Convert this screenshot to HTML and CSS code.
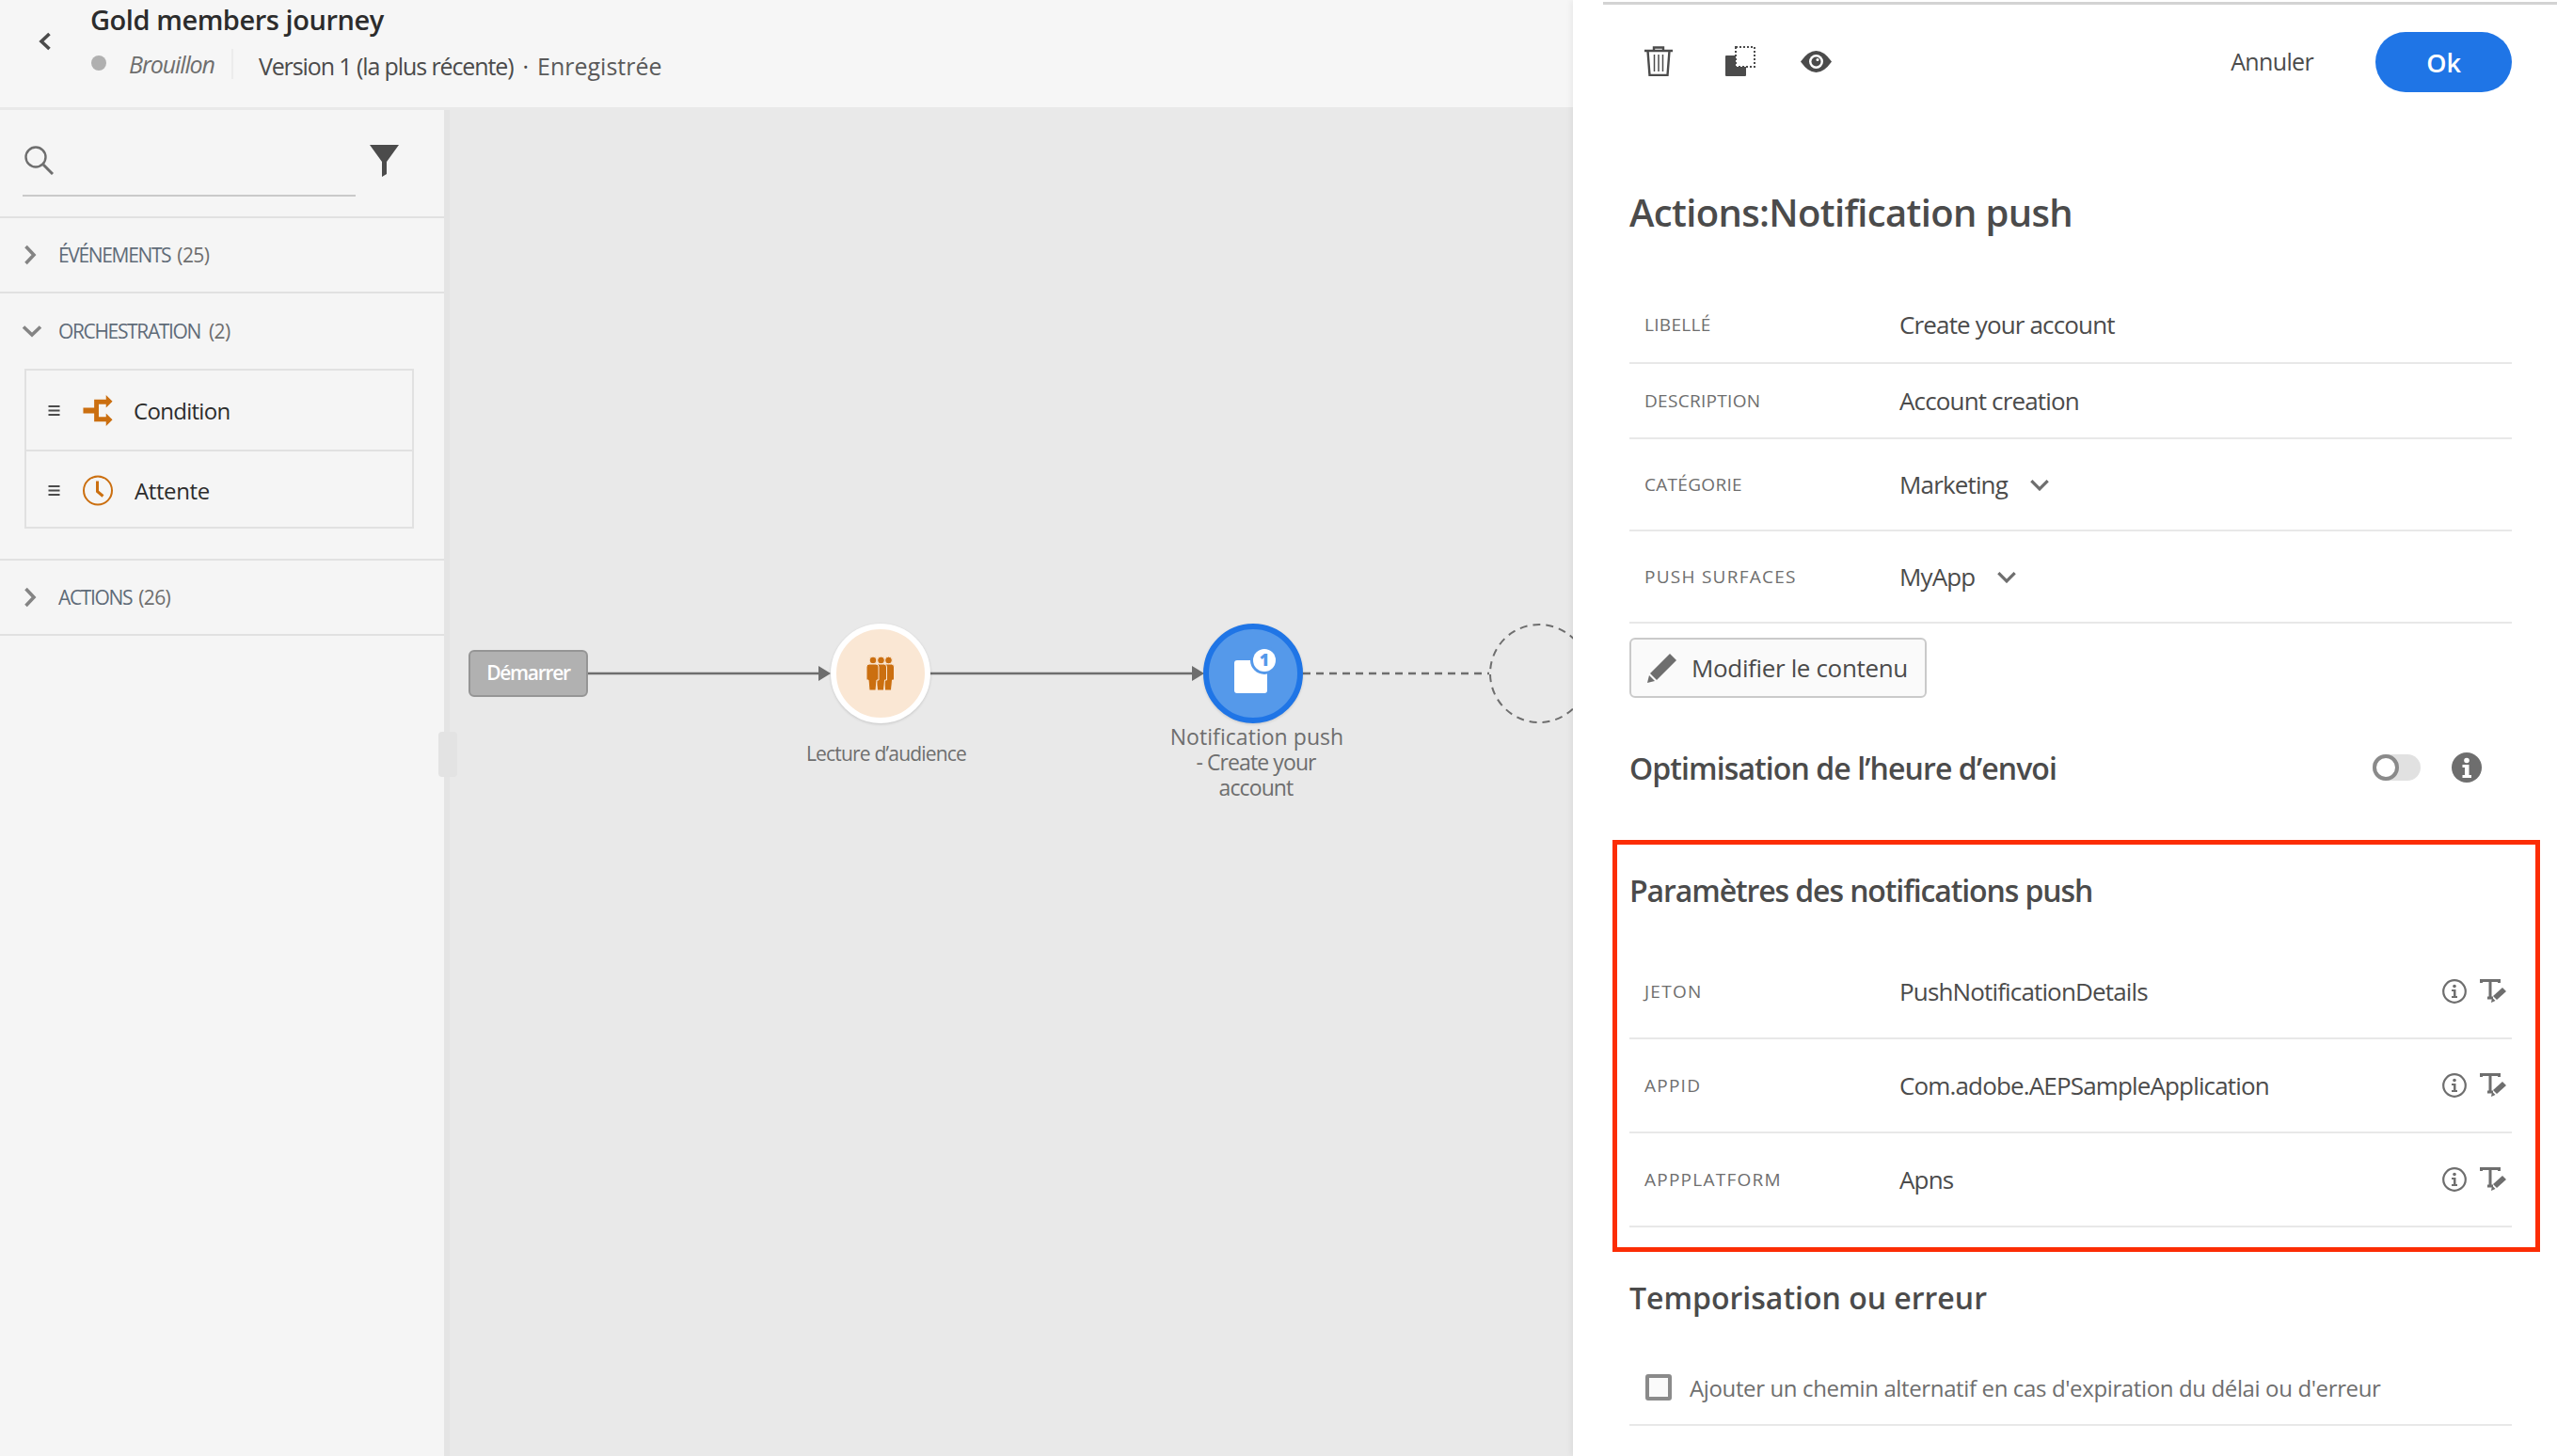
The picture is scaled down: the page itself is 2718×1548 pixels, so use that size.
FILE: index.html
```html
<!DOCTYPE html>
<html lang="fr">
<head>
<meta charset="utf-8">
<title>Gold members journey</title>
<link rel="stylesheet" href="styles.css">
</head>
<body>
<div class="app">
  <div class="main">
    <header class="topbar">
      <svg class="back" viewBox="0 0 14 20"><path d="M11.5 2 3 10l8.500 8" fill="none" stroke="#4b4b4b" stroke-width="3.600"/></svg>
      <div class="topbar-text">
        <div class="journey-title">Gold members journey</div>
        <div class="journey-meta">
          <span class="status-dot"></span>
          <span class="status">Brouillon</span>
          <span class="version">Version 1 (la plus récente)</span>
          <span class="meta-sep">·</span>
          <span class="saved">Enregistrée</span>
        </div>
      </div>
    </header>
    <div class="workspace">
      <aside class="sidebar">
        <div class="search">
          <div class="search-field">
            <svg class="search-icon" viewBox="0 0 32 32"><circle cx="13" cy="13" r="10.500" fill="none" stroke="#6e6e6e" stroke-width="2.400"/><path d="m21 21 10 10" stroke="#6e6e6e" stroke-width="3" fill="none"/></svg>
          </div>
          <svg class="funnel" viewBox="0 0 31 34"><path d="M0 0h31L18 18v13l-5 3V18z" fill="#4b4b4b"/></svg>
        </div>
        <div class="group-row">
          <svg class="chev" viewBox="0 0 14 22"><path d="m2.500 2 8.500 9-8.500 9" fill="none" stroke="#848484" stroke-width="3.600"/></svg>
          <span class="group-name">ÉVÉNEMENTS</span><span class="group-count">(25)</span>
        </div>
        <div class="group-open">
          <div class="group-head">
            <svg class="chev-down" viewBox="0 0 22 14"><path d="m2 2.500 9 8.500 9-8.500" fill="none" stroke="#848484" stroke-width="3.600"/></svg>
            <span class="group-name">ORCHESTRATION</span><span class="group-count wide">(2)</span>
          </div>
          <div class="palette">
            <div class="palette-item">
              <svg class="drag" viewBox="0 0 12 11"><path d="M0 1h12M0 5.500h12M0 10h12" stroke="#4b4b4b" stroke-width="2"/></svg>
              <svg class="tool-icon" viewBox="0 0 32 34"><path d="M0 14h12V5h13V0l7 7-7 7v-4h-8v14h8v-4l7 7-7 7v-5H12V20H0z" fill="#cb6f10"/></svg>
              <span class="tool-name">Condition</span>
            </div>
            <div class="palette-item">
              <svg class="drag" viewBox="0 0 12 11"><path d="M0 1h12M0 5.500h12M0 10h12" stroke="#4b4b4b" stroke-width="2"/></svg>
              <svg class="tool-icon" viewBox="0 0 32 32"><circle cx="16" cy="16" r="15" fill="none" stroke="#cb6f10" stroke-width="2"/><path d="M15.500 6v11l6 5" fill="none" stroke="#cb6f10" stroke-width="3"/></svg>
              <span class="tool-name tool-name-wait">Attente</span>
            </div>
          </div>
        </div>
        <div class="group-row">
          <svg class="chev" viewBox="0 0 14 22"><path d="m2.500 2 8.500 9-8.500 9" fill="none" stroke="#848484" stroke-width="3.600"/></svg>
          <span class="group-name">ACTIONS</span><span class="group-count">(26)</span>
        </div>
      </aside>
      <section class="canvas">
        <svg class="links" viewBox="0 0 1194 1434">
          <path d="M146 602h250" stroke="#6e6e6e" stroke-width="2.500"/>
          <path d="m392 594 13 8-13 8z" fill="#6e6e6e"/>
          <path d="M510 602h280" stroke="#6e6e6e" stroke-width="2.500"/>
          <path d="m789 594 13 8-13 8z" fill="#6e6e6e"/>
          <path d="M907 602h198" stroke="#6e6e6e" stroke-width="2.500" stroke-dasharray="8 6"/>
          <circle cx="1158" cy="602" r="52" fill="none" stroke="#6e6e6e" stroke-width="2" stroke-dasharray="8 6"/>
        </svg>
        <div class="handle"></div>
        <div class="start-node">Démarrer</div>
        <div class="node node-audience">
          <svg class="audience-icon" viewBox="0 0 30 36">
            <g fill="#cb6f10" stroke="#fae7d4" stroke-width="1">
              <g transform="translate(16.500 0)"><circle cx="7" cy="4" r="3.900"/><path d="M0 11q0-3 3-3h7q3 0 3 3v14h-2l-1 11H3L2 25H0z"/></g>
              <g transform="translate(8.500 0)"><circle cx="7" cy="4" r="3.900"/><path d="M0 11q0-3 3-3h7q3 0 3 3v14h-2l-1 11H3L2 25H0z"/></g>
              <g><circle cx="7" cy="4" r="3.900"/><path d="M0 11q0-3 3-3h7q3 0 3 3v14h-2l-1 11H3L2 25H0z"/></g>
            </g>
          </svg>
        </div>
        <div class="node-label label-audience">Lecture d’audience</div>
        <div class="node node-push">
          <svg class="push-icon" viewBox="0 0 60 60">
            <rect x="10" y="16" width="35" height="35" rx="3" fill="#fff"/>
            <circle cx="42" cy="16" r="15" fill="#5599ea"/>
            <circle cx="42" cy="16" r="12" fill="#fff"/>
            <text x="42" y="22" class="badge-num">1</text>
          </svg>
        </div>
        <div class="node-label label-push"><span class="label-first">Notification push</span><br>- Create your<br>account</div>
      </section>
    </div>
  </div>

  <aside class="panel">
    <div class="panel-rule"></div>
    <div class="toolbar">
      <svg class="tb-trash" viewBox="0 0 30 32"><path d="M0 5h30M10 5V1.500h10V5M3.500 5l2 26h19l2-26" fill="none" stroke="#4b4b4b" stroke-width="2.400"/><path d="M10.500 9v18M15 9v18M19.500 9v18" stroke="#4b4b4b" stroke-width="1.500"/></svg>
      <svg class="tb-copy" viewBox="0 0 32 32"><path d="M1 10h10v12h11v9a1 1 0 0 1-1 1H1a1 1 0 0 1-1-1V11a1 1 0 0 1 1-1z" fill="#4b4b4b"/><rect x="11" y="1" width="20" height="21" fill="none" stroke="#4b4b4b" stroke-width="2" stroke-dasharray="2 2"/></svg>
      <svg class="tb-eye" viewBox="0 0 33 23"><path d="M0 11.500Q8 0 16.500 0T33 11.500Q25 23 16.500 23T0 11.500z" fill="#4b4b4b"/><circle cx="16.500" cy="11.500" r="7.500" fill="#fff"/><circle cx="16.500" cy="11.500" r="5" fill="#4b4b4b"/><circle cx="18" cy="9.500" r="1.500" fill="#fff"/></svg>
      <span class="cancel">Annuler</span>
      <span class="ok">Ok</span>
    </div>
    <h1 class="panel-title">Actions:Notification push</h1>
    <div class="field field-a"><span class="field-label">LIBELLÉ</span><span class="field-value">Create your account</span></div>
    <div class="field field-b"><span class="field-label">DESCRIPTION</span><span class="field-value">Account creation</span></div>
    <div class="field field-c"><span class="field-label">CATÉGORIE</span><span class="field-value">Marketing</span>
      <svg class="select-chev" viewBox="0 0 20 12"><path d="m2 2 8 8 8-8" fill="none" stroke="#6e6e6e" stroke-width="3"/></svg></div>
    <div class="field field-c"><span class="field-label field-label-wide">PUSH SURFACES</span><span class="field-value">MyApp</span>
      <svg class="select-chev" viewBox="0 0 20 12"><path d="m2 2 8 8 8-8" fill="none" stroke="#6e6e6e" stroke-width="3"/></svg></div>
    <button class="edit-btn">
      <svg class="pencil" viewBox="0 0 32 32"><path d="M24 1l7 7L10 29l-7-7z" fill="#6e6e6e"/><path d="M2 24l6 6-8 2z" fill="#6e6e6e"/></svg>
      <span>Modifier le contenu</span>
    </button>
    <div class="optim">
      <h2 class="section-title">Optimisation de l’heure d’envoi</h2>
      <span class="toggle"><span class="toggle-knob"></span></span>
      <svg class="info-solid" viewBox="0 0 32 32"><circle cx="16" cy="16" r="16" fill="#6e6e6e"/><circle cx="16" cy="8.500" r="2.800" fill="#fff"/><path d="M11.500 13h7v11h2.500v3H11.500v-3H14v-8h-2.500z" fill="#fff"/></svg>
    </div>
    <div class="highlight">
      <h2 class="section-title highlight-title">Paramètres des notifications push</h2>
      <div class="param"><span class="field-label field-label-wide">JETON</span><span class="field-value">PushNotificationDetails</span>
        <svg class="info-line" viewBox="0 0 26 26"><circle cx="13" cy="13" r="11.800" fill="none" stroke="#6e6e6e" stroke-width="2.200"/><circle cx="13" cy="7.500" r="1.800" fill="#6e6e6e"/><path d="M10 11h4.500v7H16v2h-6v-2h2v-5h-2z" fill="#6e6e6e"/></svg>
        <svg class="t-pen" viewBox="0 0 28 26"><path d="M1.500 4V1.500h19V4M11 1.500V20H8M11 20h3" fill="none" stroke="#6e6e6e" stroke-width="3"/><path d="M24 9l4 4-10 9-4-4z" fill="#6e6e6e"/><path d="M13 19.500l3.500 3.500-4.500 2z" fill="#6e6e6e"/></svg></div>
      <div class="param"><span class="field-label field-label-wide">APPID</span><span class="field-value">Com.adobe.AEPSampleApplication</span>
        <svg class="info-line" viewBox="0 0 26 26"><circle cx="13" cy="13" r="11.800" fill="none" stroke="#6e6e6e" stroke-width="2.200"/><circle cx="13" cy="7.500" r="1.800" fill="#6e6e6e"/><path d="M10 11h4.500v7H16v2h-6v-2h2v-5h-2z" fill="#6e6e6e"/></svg>
        <svg class="t-pen" viewBox="0 0 28 26"><path d="M1.500 4V1.500h19V4M11 1.500V20H8M11 20h3" fill="none" stroke="#6e6e6e" stroke-width="3"/><path d="M24 9l4 4-10 9-4-4z" fill="#6e6e6e"/><path d="M13 19.500l3.500 3.500-4.500 2z" fill="#6e6e6e"/></svg></div>
      <div class="param"><span class="field-label field-label-wide">APPPLATFORM</span><span class="field-value">Apns</span>
        <svg class="info-line" viewBox="0 0 26 26"><circle cx="13" cy="13" r="11.800" fill="none" stroke="#6e6e6e" stroke-width="2.200"/><circle cx="13" cy="7.500" r="1.800" fill="#6e6e6e"/><path d="M10 11h4.500v7H16v2h-6v-2h2v-5h-2z" fill="#6e6e6e"/></svg>
        <svg class="t-pen" viewBox="0 0 28 26"><path d="M1.500 4V1.500h19V4M11 1.500V20H8M11 20h3" fill="none" stroke="#6e6e6e" stroke-width="3"/><path d="M24 9l4 4-10 9-4-4z" fill="#6e6e6e"/><path d="M13 19.500l3.500 3.500-4.500 2z" fill="#6e6e6e"/></svg></div>
    </div>
    <h2 class="section-title timeout-title">Temporisation ou erreur</h2>
    <div class="check-row">
      <span class="checkbox"></span>
      <span class="check-label">Ajouter un chemin alternatif en cas d'expiration du délai ou d'erreur</span>
    </div>
  </aside>
</div>
</body>
</html>
```
FILE: styles.css
```css
* { box-sizing: border-box; }
html, body { margin: 0; padding: 0; }
body {
  width: 2718px;
  height: 1548px;
  overflow: hidden;
  background: #fff;
  font-family: "Open Sans", "Noto Sans", sans-serif;
  color: #4b4b4b;
}
.app { display: flex; width: 2718px; height: 1548px; }
.main { width: 1672px; display: flex; flex-direction: column; flex: none; }

.topbar {
  height: 114px;
  flex: none;
  background: #f6f6f6;
  display: flex;
  position: relative;
  padding-left: 96px;
}
.back { position: absolute; left: 41px; top: 34px; width: 14px; height: 20px; }
.topbar-text { display: flex; flex-direction: column; }
.journey-title {
  height: 42px;
  line-height: 42px;
  font-size: 29px;
  font-weight: 600;
  letter-spacing: -0.45px;
  color: #2c2c2c;
}
.journey-meta {
  display: flex;
  align-items: center;
  height: 56px;
  font-size: 25px;
  letter-spacing: -1.1px;
  padding-left: 1px;
}
.status-dot { width: 16px; height: 16px; border-radius: 50%; background: #b0b0b0; margin-right: 24px; margin-top: -6px; }
.status {
  font-style: italic;
  color: #6e6e6e;
  padding-right: 18px;
  border-right: 2px solid #ececec;
  line-height: 32px;
  margin-top: -5px;
  font-size: 25px;
}
.version { margin-left: 27px; color: #4b4b4b; }
.meta-sep { margin: 0 10px; }
.saved { letter-spacing: 0; color: #5a5a5a; }

.workspace { flex: 1; display: flex; background: #e9e9e9; min-height: 0; }
.sidebar {
  width: 478px;
  flex: none;
  margin-top: 3px;
  background: #f5f5f5;
  border-right: 6px solid #e4e4e4;
}
.search {
  height: 115px;
  border-bottom: 2px solid #e1e1e1;
  display: flex;
  align-items: flex-start;
  padding: 37px 0 0 24px;
}
.search-field { width: 354px; height: 55px; border-bottom: 2px solid #c9c9c9; padding-left: 1px; }
.search-icon { display: block; width: 32px; height: 32px; }
.funnel { width: 31px; height: 34px; margin-left: 15px; }
.group-row {
  height: 80px;
  border-bottom: 2px solid #e1e1e1;
  display: flex;
  align-items: center;
  padding-left: 25px;
  font-size: 21px;
}
.chev { width: 14px; height: 22px; margin-right: 23px; flex: none; }
.chev-down { width: 22px; height: 14px; margin-left: -3px; margin-right: 17px; flex: none; }
.group-name { color: #5f6b78; letter-spacing: -1.35px; }
.group-count { color: #6e6e6e; margin-left: 7px; letter-spacing: -0.6px; }
.group-count.wide { margin-left: 9px; }
.group-open { height: 284px; border-bottom: 2px solid #e1e1e1; padding-left: 26px; }
.group-head { height: 80px; display: flex; align-items: center; font-size: 21px; }
.palette { width: 414px; height: 170px; border: 2px solid #e1e1e1; }
.palette-item {
  height: 84px;
  display: flex;
  align-items: center;
  padding-left: 23px;
}
.palette-item + .palette-item { border-top: 2px solid #e1e1e1; }
.drag { width: 13px; height: 11px; flex: none; margin-right: 24px; }
.tool-icon { width: 32px; height: 33px; flex: none; margin-right: 22px; }
.tool-name { font-size: 24px; letter-spacing: -0.7px; color: #2c2c2c; }
.tool-name-wait { margin-left: 1px; letter-spacing: -0.4px; }

.canvas { flex: 1; position: relative; }
.links { position: absolute; left: 0; top: 0; width: 1194px; height: 1434px; }
.handle { position: absolute; left: -12px; top: 664px; width: 20px; height: 48px; background: #e3e3e3; border-radius: 4px; }
.start-node {
  position: absolute;
  left: 20px;
  top: 577px;
  width: 127px;
  height: 50px;
  background: #b1b1b1;
  border: 2px solid #959595;
  border-radius: 6px;
  color: #fff;
  font-size: 21px;
  font-weight: 600;
  letter-spacing: -1.3px;
  display: flex;
  align-items: center;
  justify-content: center;
  padding-bottom: 2px;
}
.node {
  position: absolute;
  top: 549px;
  width: 106px;
  height: 106px;
  border-radius: 50%;
  display: flex;
  align-items: center;
  justify-content: center;
  box-shadow: 0 1px 3px rgba(0, 0, 0, 0.15);
}
.node-audience { left: 405px; background: #fae7d4; border: 6px solid #fff; }
.audience-icon { width: 30px; height: 36px; }
.node-push { left: 801px; background: #5599ea; border: 6px solid #1f75e6; }
.push-icon { width: 60px; height: 60px; overflow: visible; }
.badge-num { font-size: 18px; font-weight: 800; fill: #5599ea; text-anchor: middle; font-family: "Open Sans", sans-serif; }
.node-label {
  position: absolute;
  text-align: center;
  color: #6e6e6e;
  white-space: nowrap;
}
.label-audience { left: 354px; width: 220px; top: 673px; font-size: 21px; line-height: 28px; letter-spacing: -0.8px; }
.label-push { left: 747px; width: 220px; top: 656px; font-size: 23px; line-height: 27px; letter-spacing: -0.9px; }
.label-first { letter-spacing: 0.05px; margin-left: 2px; }

.panel {
  width: 1046px;
  flex: none;
  position: relative;
  background: #fff;
  padding: 2px 48px 0 60px;
  box-shadow: -2px 0 6px rgba(0, 0, 0, 0.06);
}
.panel-rule { height: 3px; background: #d3d3d3; margin: 0 -48px 0 -28px; }
.toolbar { height: 120px; display: flex; align-items: center; padding-left: 16px; }
.tb-trash { width: 30px; height: 32px; margin-top: 6px; }
.tb-copy { width: 32px; height: 32px; margin-left: 56px; margin-top: 6px; }
.tb-eye { width: 33px; height: 23px; margin-left: 48px; margin-top: 6px; }
.tb-trash, .tb-copy, .tb-eye { position: relative; top: -3px; }
.cancel { margin-left: auto; font-size: 25px; letter-spacing: -0.65px; color: #4b4b4b; margin-right: 66px; margin-top: -1px; }
.ok {
  width: 145px;
  height: 64px;
  border-radius: 32px;
  background: #1f75e6;
  color: #fff;
  font-size: 27px;
  font-weight: 600;
  display: flex;
  align-items: center;
  justify-content: center;
  margin-top: 2px;
}
.panel-title {
  margin: 0;
  height: 180px;
  padding-top: 20px;
  display: flex;
  align-items: center;
  font-size: 40px;
  font-weight: 600;
  letter-spacing: -0.65px;
  color: #4b4b4b;
}
.field {
  display: flex;
  align-items: center;
  border-bottom: 2px solid #e8e8e8;
  padding-left: 16px;
}
.field-a { height: 82px; }
.field-b { height: 80px; }
.field-c { height: 98px; }
.field-label { width: 271px; flex: none; font-size: 19px; letter-spacing: 0.3px; color: #6e6e6e; }
.field-label-wide { letter-spacing: 1.25px; }
.field-value { font-size: 26px; letter-spacing: -0.85px; color: #4b4b4b; }
.select-chev { width: 22px; height: 13px; margin-left: 23px; }
.edit-btn {
  display: flex;
  align-items: center;
  width: 316px;
  height: 64px;
  margin-top: 15px;
  padding: 0 0 0 18px;
  background: #fafafa;
  border: 2px solid #cacaca;
  border-radius: 6px;
  font: inherit;
  font-size: 26px;
  letter-spacing: -0.35px;
  color: #4b4b4b;
}
.pencil { width: 32px; height: 32px; margin-right: 15px; margin-left: -1px; }
.optim { display: flex; align-items: center; height: 60px; margin-top: 44px; }
.section-title { margin: 0; font-size: 32px; font-weight: 600; letter-spacing: -0.9px; color: #4b4b4b; }
.toggle { margin-left: auto; width: 51px; height: 28px; border-radius: 14px; background: #e1e1e1; }
.toggle-knob { display: block; width: 28px; height: 28px; border-radius: 50%; background: #fff; border: 4px solid #8a8a8a; }
.info-solid { width: 32px; height: 32px; margin-left: 33px; margin-right: 32px; }
.highlight {
  margin: 47px -30px 0 -18px;
  height: 438px;
  border: 5px solid #fc2d05;
  padding: 0 25px 0 13px;
}
.highlight-title { height: 107px; display: flex; align-items: center; padding-bottom: 10px; letter-spacing: -1.1px; }
.param {
  height: 100px;
  display: flex;
  align-items: center;
  border-bottom: 2px solid #e8e8e8;
  padding-left: 16px;
}
.info-line { width: 26px; height: 26px; margin-left: auto; }
.t-pen { width: 28px; height: 26px; margin-left: 14px; margin-right: 6px; }
.timeout-title { height: 96px; display: flex; align-items: center; letter-spacing: 0; }
.check-row {
  display: flex;
  align-items: center;
  height: 80px;
  margin-top: 9px;
  border-bottom: 2px solid #e8e8e8;
  padding-left: 17px;
}
.checkbox { width: 28px; height: 28px; background: #fafafa; border: 4px solid #8a8a8a; border-radius: 3px; margin-right: 19px; }
.check-label { font-size: 24px; letter-spacing: -0.37px; color: #6e6e6e; }
```
